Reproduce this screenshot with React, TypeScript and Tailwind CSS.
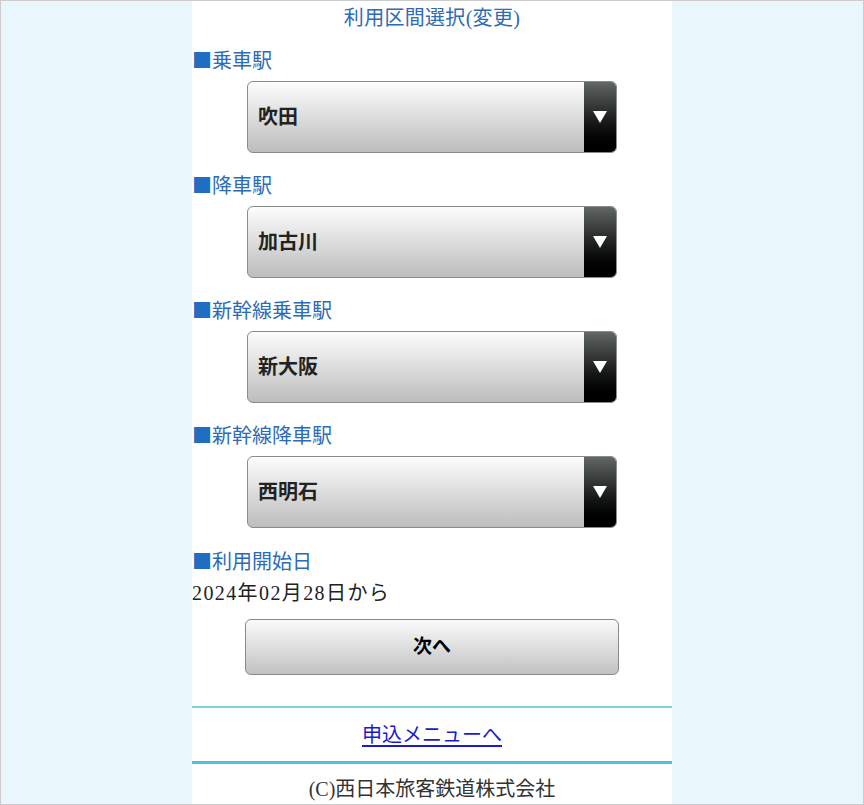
import React from 'react';

interface StationSelectProps {
  label: string;
  value: string;
}

const Label: React.FC<{ text: string }> = ({ text }) => (
  <div className="h-[30px] leading-[30px] text-[20px] text-[#2d6bb4]">
    <span className="text-[#1f6fc1]" style={{ fontFamily: '"Noto Sans CJK JP", sans-serif' }}>■</span>
    {text}
  </div>
);

const StationSelect: React.FC<StationSelectProps> = ({ label, value }) => {
  return (
    <div>
      <Label text={label} />
      <div className="mt-[6px] mx-auto w-[370px] h-[72px] flex rounded-[6px] border border-[#8a8a8a] overflow-hidden bg-gradient-to-b from-[#fdfdfd] to-[#bdbdbd]">
        <span className="flex-1 flex items-center pl-[10px] text-[20px] font-bold text-[#222]">{value}</span>
        <span className="w-[32px] flex items-center justify-center bg-gradient-to-b from-[#626866] to-[#000]">
          <svg width="14" height="12" viewBox="0 0 14 12">
            <path d="M0 0 H14 L7 12 Z" fill="#fff" />
          </svg>
        </span>
      </div>
    </div>
  );
};

const stations = [
  { label: '乗車駅', value: '吹田' },
  { label: '降車駅', value: '加古川' },
  { label: '新幹線乗車駅', value: '新大阪' },
  { label: '新幹線降車駅', value: '西明石' },
];

export default function App() {
  return (
    <div
      className="h-[805px] border border-[#cccccc] bg-[#e9f6fc] overflow-hidden"
      style={{ fontFamily: '"Liberation Serif", "Noto Sans CJK JP", serif' }}
    >
      <div className="w-[480px] h-full mx-auto bg-white">
        <h1 className="pt-[2px] h-[32px] leading-[30px] text-center text-[20px] tracking-[0.3px] text-[#2d6bb4]">利用区間選択(変更)</h1>

        <div className="mt-[12px] flex flex-col gap-[17px]">
          {stations.map((s) => (
            <StationSelect key={s.label} label={s.label} value={s.value} />
          ))}
        </div>

        <div className="mt-[18px]">
          <Label text="利用開始日" />
        </div>
        <div className="mt-[2px] h-[30px] leading-[30px] text-[20px] tracking-[1.4px] text-[#222]">2024年02月28日から</div>

        <div className="mt-[11px] flex justify-center">
          <button className="w-[374px] h-[56px] rounded-[6px] border border-[#8a8a8a] bg-gradient-to-b from-[#fbfbfb] to-[#c2c2c2] text-[19px] font-bold text-black">
            次へ
          </button>
        </div>

        <div className="mt-[31px] h-[2px] bg-[#7fd0e2]" />
        <div className="h-[53px] flex items-center justify-center">
          <a href="#" className="text-[20px] text-[#1a1ad0] underline underline-offset-[3px]">申込メニューへ</a>
        </div>
        <div className="h-[3px] bg-[#4bc2d6]" />
        <div className="h-[50px] flex items-center justify-center text-[20px] text-[#333]">(C)西日本旅客鉄道株式会社</div>
      </div>
    </div>
  );
}
